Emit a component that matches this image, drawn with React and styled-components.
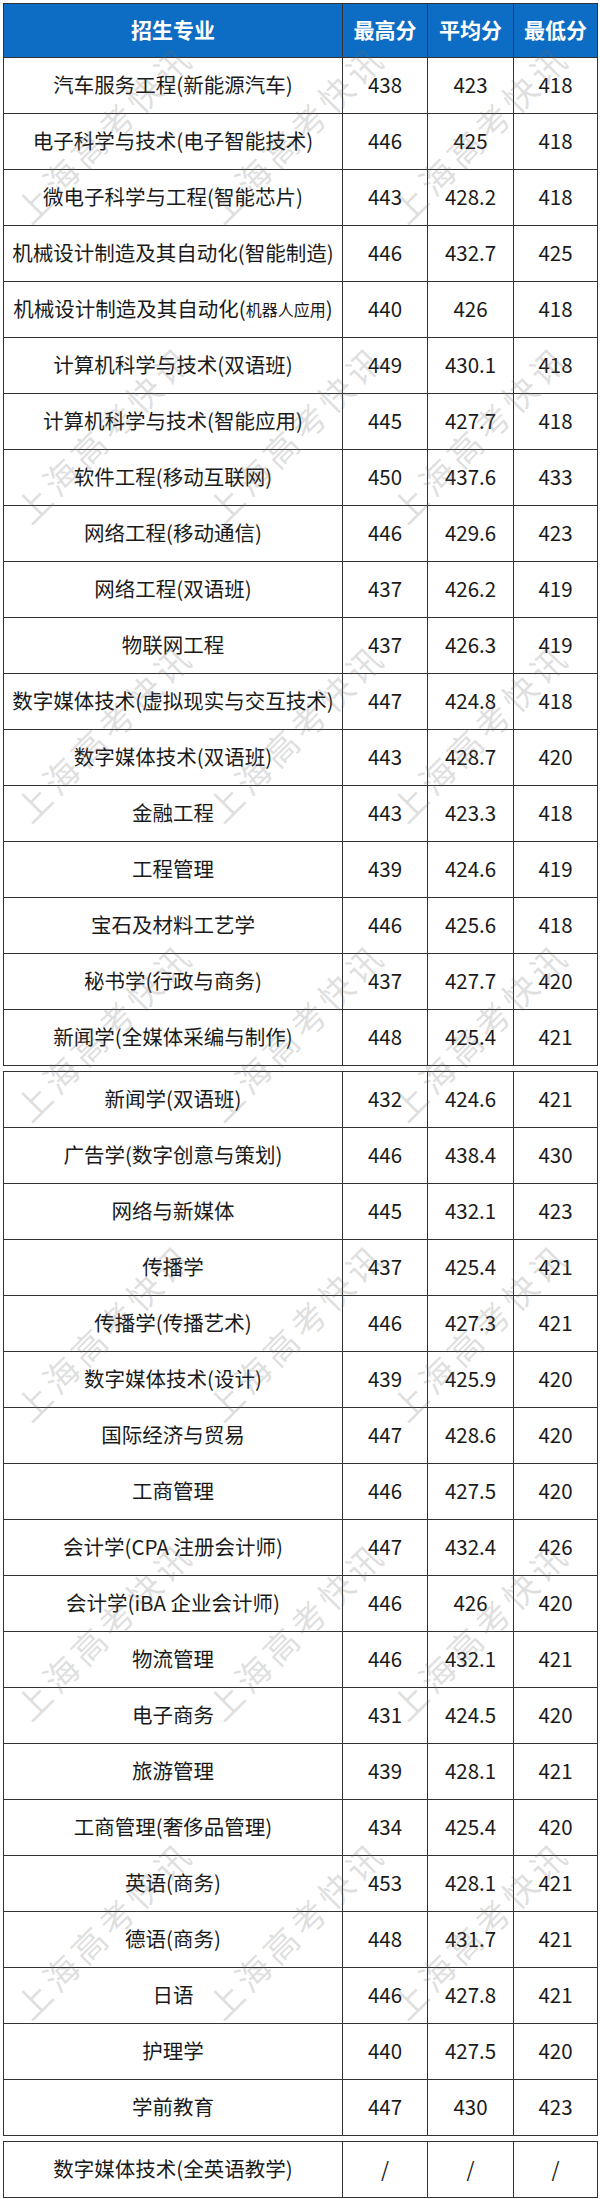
import React from "react";
import styled, { createGlobalStyle } from "styled-components";

const Global = createGlobalStyle`
  html, body { margin: 0; padding: 0; background: #ffffff; }
  body { font-family: "Noto Sans CJK SC", "Noto Sans", sans-serif; }
`;

const Page = styled.div`
  position: relative;
  width: 600px;
  height: 2199px;
  padding: 3px 0 0 3px;
  box-sizing: border-box;
  overflow: hidden;
  display: flex;
  flex-direction: column;
  gap: 5px;
`;

const Table = styled.div`
  display: grid;
  grid-template-columns: 339px 85px 86px 84px;
  width: 595px;
  box-sizing: border-box;
  border-top: 1px solid #333;
  border-left: 1px solid #333;
`;

const Cell = styled.div`
  box-sizing: border-box;
  height: ${(p) => (p.$head ? 54 : 56)}px;
  border-right: 1px solid #333;
  border-bottom: 1px solid #333;
  display: flex;
  align-items: center;
  justify-content: center;
  white-space: nowrap;
  font-size: ${(p) => (p.$head ? 21 : 20.5)}px;
  line-height: 1;
  color: ${(p) => (p.$head ? "#ffffff" : "#1a1a1a")};
  background: ${(p) => (p.$head ? "#0d6cc3" : "transparent")};
  font-weight: ${(p) => (p.$head ? 700 : 400)};
  padding-bottom: 2px;
`;

const Small = styled.span`
  font-size: 16px;
`;

const Overlay = styled.div`
  position: absolute;
  inset: 0;
  pointer-events: none;
  overflow: hidden;
`;

const Mark = styled.span`
  position: absolute;
  font-size: 34px;
  line-height: 34px;
  letter-spacing: 5px;
  white-space: nowrap;
  color: rgba(110, 110, 110, 0.22);
  transform-origin: 0 50%;
  transform: rotate(-45deg);
`;

const main1 = [
  ["汽车服务工程(新能源汽车)", "438", "423", "418"],
  ["电子科学与技术(电子智能技术)", "446", "425", "418"],
  ["微电子科学与工程(智能芯片)", "443", "428.2", "418"],
  ["机械设计制造及其自动化(智能制造)", "446", "432.7", "425"],
  [
    <>
      机械设计制造及其自动化(<Small>机器人应用</Small>)
    </>,
    "440",
    "426",
    "418",
  ],
  ["计算机科学与技术(双语班)", "449", "430.1", "418"],
  ["计算机科学与技术(智能应用)", "445", "427.7", "418"],
  ["软件工程(移动互联网)", "450", "437.6", "433"],
  ["网络工程(移动通信)", "446", "429.6", "423"],
  ["网络工程(双语班)", "437", "426.2", "419"],
  ["物联网工程", "437", "426.3", "419"],
  ["数字媒体技术(虚拟现实与交互技术)", "447", "424.8", "418"],
  ["数字媒体技术(双语班)", "443", "428.7", "420"],
  ["金融工程", "443", "423.3", "418"],
  ["工程管理", "439", "424.6", "419"],
  ["宝石及材料工艺学", "446", "425.6", "418"],
  ["秘书学(行政与商务)", "437", "427.7", "420"],
  ["新闻学(全媒体采编与制作)", "448", "425.4", "421"],
];

const main2 = [
  ["新闻学(双语班)", "432", "424.6", "421"],
  ["广告学(数字创意与策划)", "446", "438.4", "430"],
  ["网络与新媒体", "445", "432.1", "423"],
  ["传播学", "437", "425.4", "421"],
  ["传播学(传播艺术)", "446", "427.3", "421"],
  ["数字媒体技术(设计)", "439", "425.9", "420"],
  ["国际经济与贸易", "447", "428.6", "420"],
  ["工商管理", "446", "427.5", "420"],
  ["会计学(CPA 注册会计师)", "447", "432.4", "426"],
  ["会计学(iBA 企业会计师)", "446", "426", "420"],
  ["物流管理", "446", "432.1", "421"],
  ["电子商务", "431", "424.5", "420"],
  ["旅游管理", "439", "428.1", "421"],
  ["工商管理(奢侈品管理)", "434", "425.4", "420"],
  ["英语(商务)", "453", "428.1", "421"],
  ["德语(商务)", "448", "431.7", "421"],
  ["日语", "446", "427.8", "421"],
  ["护理学", "440", "427.5", "420"],
  ["学前教育", "447", "430", "423"],
];

const extra = [["数字媒体技术(全英语教学)", "/", "/", "/"]];

const Rows = ({ rows }) =>
  rows.map((r, i) =>
    r.map((c, j) => <Cell key={`${i}-${j}`}>{c}</Cell>)
  );

const marks = [];
for (let k = 1; k < 8; k++) {
  const y = -83 + 299.3 * k;
  [38, 230, 414].forEach((x) => marks.push({ x, y }));
}

export default function App() {
  return (
    <>
      <Global />
      <Page>
        <Table>
          <Cell $head>招生专业</Cell>
          <Cell $head>最高分</Cell>
          <Cell $head>平均分</Cell>
          <Cell $head>最低分</Cell>
          <Rows rows={main1} />
        </Table>
        <Table>
          <Rows rows={main2} />
        </Table>
        <Table>
          <Rows rows={extra} />
        </Table>
        <Overlay>
          {marks.map((m, i) => (
            <Mark key={i} style={{ left: m.x - 17, top: m.y - 17 }}>
              上海高考快讯
            </Mark>
          ))}
        </Overlay>
      </Page>
    </>
  );
}
